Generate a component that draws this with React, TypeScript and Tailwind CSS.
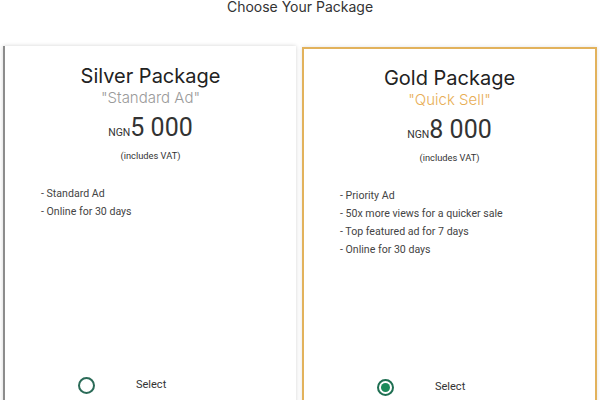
import React from "react";

const head = { fontFamily: "Inter, 'Open Sans', sans-serif" };
const body = { fontFamily: "Roboto, 'Liberation Sans', sans-serif" };

function Radio({ checked }: { checked: boolean }) {
  return checked ? (
    <div className="flex h-[17px] w-[17px] items-center justify-center rounded-full border-2 border-[#1f6f52]">
      <div className="h-[9px] w-[9px] rounded-full bg-[#1b8a5a]" />
    </div>
  ) : (
    <div className="h-[17px] w-[17px] rounded-full border-2 border-[#2b6b58]" />
  );
}

function Card({
  gold,
  title,
  sub,
  price,
  features,
}: {
  gold: boolean;
  title: string;
  sub: string;
  price: string;
  features: string[];
}) {
  return (
    <div
      className={
        "flex h-[380px] flex-1 flex-col bg-white " +
        (gold
          ? "mt-[1px] border-2 border-[#e2b25c] shadow-[0_0_4px_rgba(0,0,0,0.12)]"
          : "border-l-2 border-[#8c8c8c] shadow-[0_0_4px_rgba(0,0,0,0.18)]")
      }
    >
      <div className={"text-center " + (gold ? "pt-[17px]" : "pt-[18px]")}>
        <div className="text-[20px] leading-[24px] text-[#222]" style={head}>
          {title}
        </div>
        <div
          className={
            "mt-[1px] text-[15px] leading-[18px] font-light " +
            (gold ? "text-[#e8ae55]" : "text-[#9a9a9a]")
          }
          style={head}
        >
          "{sub}"
        </div>
        <div className="mt-[6px] flex items-baseline justify-center text-[#333]" style={body}>
          <span className="text-[10.5px] leading-[30px]">NGN</span>
          <span className="text-[25px] leading-[30px]">{price}</span>
        </div>
        <div className="mt-[1px] text-[9.3px] leading-[14px] text-[#333]" style={body}>
          (includes VAT)
        </div>
      </div>
      <div className="mt-[22px] h-[191px] pl-9 text-[10.6px] leading-[18px] text-[#444]" style={body}>
        {features.map((f) => (
          <div key={f}>- {f}</div>
        ))}
      </div>
      <div className="flex h-[18px] items-center pl-[73px]">
        <Radio checked={gold} />
        <span className="ml-[41px] text-[11px] text-[#333]" style={body}>
          Select
        </span>
      </div>
    </div>
  );
}

export default function App() {
  return (
    <div className="h-[400px] w-[600px] overflow-hidden bg-white">
      <div className="h-[15px] text-center text-[14px] leading-[14px] text-[#333]" style={head}>
        Choose Your Package
      </div>
      <div className="mt-[31px] flex gap-[6px] px-[3px]">
        <Card
          gold={false}
          title="Silver Package"
          sub="Standard Ad"
          price="5 000"
          features={["Standard Ad", "Online for 30 days"]}
        />
        <Card
          gold
          title="Gold Package"
          sub="Quick Sell"
          price="8 000"
          features={[
            "Priority Ad",
            "50x more views for a quicker sale",
            "Top featured ad for 7 days",
            "Online for 30 days",
          ]}
        />
      </div>
    </div>
  );
}
